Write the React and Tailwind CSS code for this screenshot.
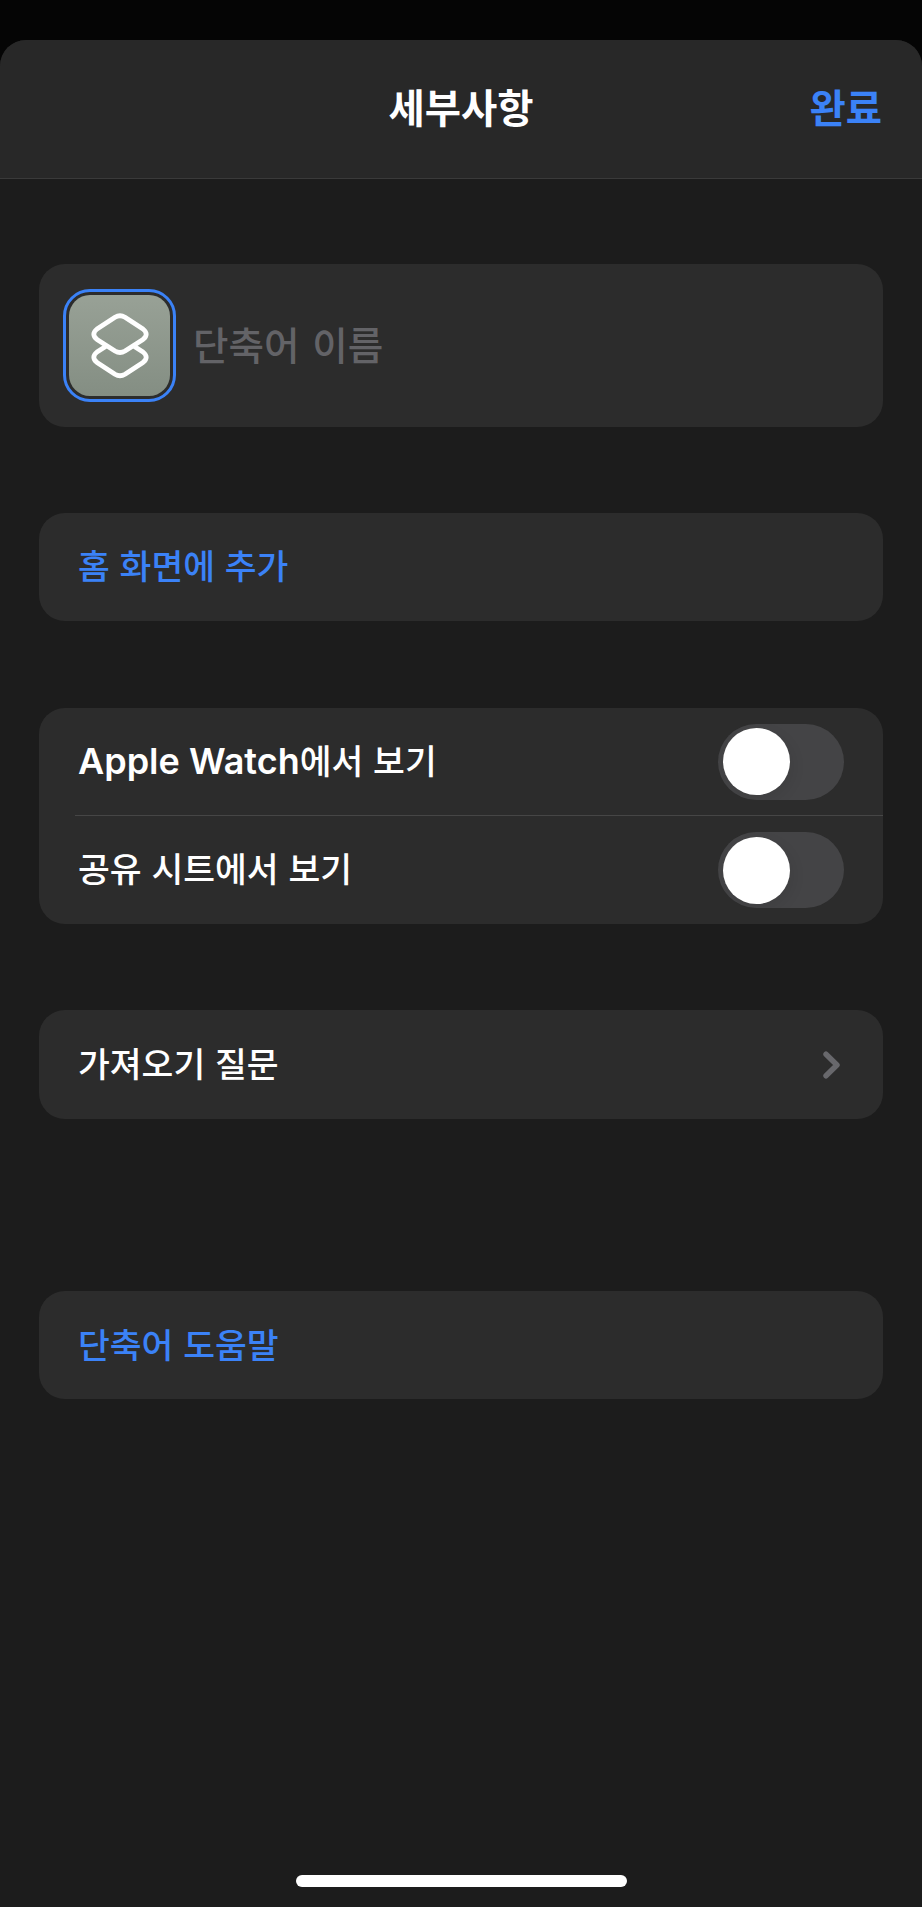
import React, { useState } from "react";

const Card = ({ className = "", children }) => (
    <section className={`w-[844px] rounded-[26px] bg-[#2c2c2c] ${className}`}>
        {children}
    </section>
);

const Toggle = ({ checked, onChange, label }) => (
    <button
        type="button"
        role="switch"
        aria-checked={checked}
        aria-label={label}
        onClick={() => onChange(!checked)}
        className={`flex h-[76px] w-[126px] items-center overflow-hidden rounded-full px-[5px] ${checked ? "justify-end bg-[#32d158]" : "justify-start bg-[#444446]"
            }`}
    >
        <span className="h-[67px] w-[67px] rounded-full bg-white shadow-[3px_5px_14px_rgba(0,0,0,0.08)]" />
    </button>
);

const ShortcutIcon = () => (
    <div className="flex h-[113px] w-[113px] items-center justify-center rounded-[27px] border-[3px] border-[#3b82f7]">
        <div className="flex h-[101px] w-[101px] items-center justify-center rounded-[21px] bg-gradient-to-b from-[#98a196] to-[#848e83]">
            <svg
                width="58"
                height="66"
                viewBox="0 0 58 66"
                fill="none"
                stroke="#fff"
                strokeWidth="4.8"
                strokeLinejoin="round"
            >
                <path d="M24 4.2Q29 1.2 34 4.2L52 16Q58.4 21.2 52 26.4L34 38Q29 41 24 38L6 26.4Q-0.4 21.2 6 16Z" />
                <path d="M14.6 33.4L6 39Q-0.4 44.2 6 49.4L24 61.2Q29 64.2 34 61.2L52 49.4Q58.4 44.2 52 39L43.4 33.4" />
            </svg>
        </div>
    </div>
);

const App = () => {
    const [showOnWatch, setShowOnWatch] = useState(false);
    const [showInShare, setShowInShare] = useState(false);
    const [name, setName] = useState("");

    return (
        <div className="h-[1907px] w-[922px] bg-[#050505] pt-10 font-['Noto_Sans_CJK_KR',sans-serif] text-white">
            <div className="flex h-full max-h-[1867px] flex-col items-center overflow-hidden rounded-t-[26px] bg-[#1c1c1c]">
                {/* Header */}
                <header className="grid h-[139px] w-full shrink-0 grid-cols-3 items-start border-b border-[#3a3a3a] bg-[#282828] px-10 pt-[38px] text-[39.4px] leading-[56px]">
                    <span />
                    <h1 className="text-center font-bold">세부사항</h1>
                    <button type="button" className="text-right font-bold text-[#3b82f7]">
                        완료
                    </button>
                </header>

                {/* Name */}
                <Card className="mt-[85px] flex h-[163px] items-center pl-6">
                    <ShortcutIcon />
                    <input
                        value={name}
                        onChange={(e) => setName(e.target.value)}
                        placeholder="단축어 이름"
                        className="mb-[5px] ml-[17px] h-[60px] w-[600px] bg-transparent text-[38.6px] font-medium outline-none [word-spacing:4px] placeholder:text-[#636367]"
                    />
                </Card>

                <Card className="mt-[86px] flex h-[108px] items-center pb-[4px] pl-[39px] text-[34.6px] font-medium text-[#3b82f7]">
                    <button type="button" className="[word-spacing:2px]">홈 화면에 추가</button>
                </Card>

                {/* Visibility */}
                <Card className="mt-[87px] text-[34.6px] font-medium [word-spacing:2px]">
                    <div className="flex h-[107px] items-center justify-between pr-[39px] pl-[39px]">
                        <span className="pb-px">
                            <span className="font-['Inter'] text-[36px] font-semibold [word-spacing:0px]">Apple Watch</span>에서 보기
                        </span>
                        <Toggle checked={showOnWatch} onChange={setShowOnWatch} label="Apple Watch" />
                    </div>
                    <div className="ml-[36px] flex h-[109px] items-center justify-between border-t border-[#464646] pr-[39px] pl-[3px]">
                        <span className="pb-[5px]">공유 시트에서 보기</span>
                        <Toggle checked={showInShare} onChange={setShowInShare} label="공유 시트" />
                    </div>
                </Card>

                <Card className="mt-[86px] flex h-[109px] items-center justify-between pr-[43px] pl-[39px] text-[34.6px] font-medium [word-spacing:2px]">
                    <span className="pb-[4px]">가져오기 질문</span>
                    <svg
                        width="17"
                        height="28"
                        viewBox="0 0 17 28"
                        fill="none"
                        stroke="#68686c"
                        strokeWidth="5.4"
                        strokeLinecap="round"
                        strokeLinejoin="round"
                    >
                        <path d="M3 3.2L14 14L3 24.8" />
                    </svg>
                </Card>

                <Card className="mt-[172px] flex h-[108px] items-center pb-[3px] pl-[39px] text-[34.6px] font-medium text-[#3b82f7]">
                    <button type="button" className="[word-spacing:2px]">단축어 도움말</button>
                </Card>

                {/* Home indicator */}
                <div className="mt-auto mb-5 h-3 w-[331px] shrink-0 rounded-full bg-white" />
            </div>
        </div>
    );
};

export default App;
